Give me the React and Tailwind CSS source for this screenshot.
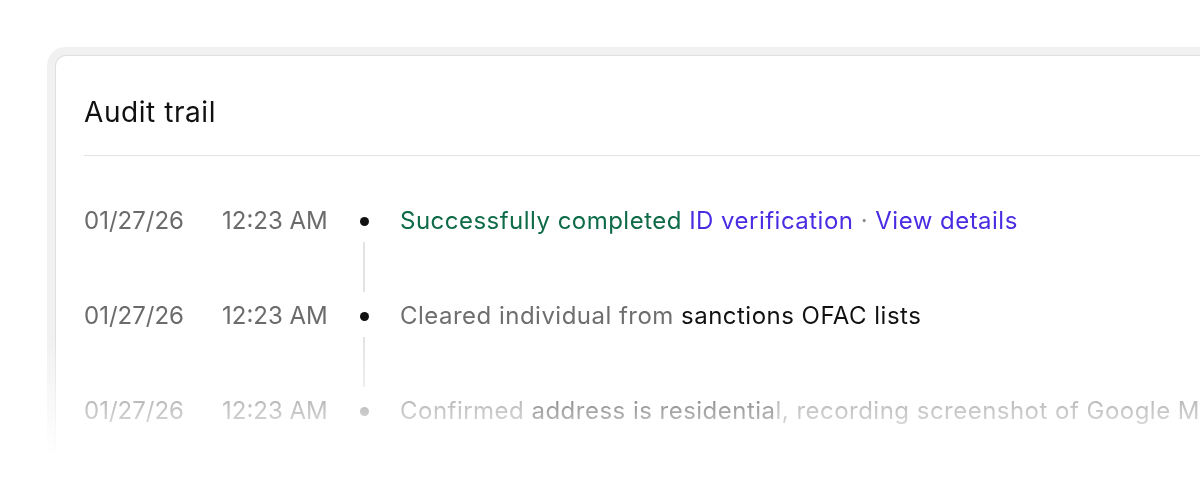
import React from "react";

const rows = [
  {
    date: "01/27/26",
    time: "12:23 AM",
    dot: "bg-[#111111]",
    body: (
      <>
        <span className="text-[#0d6b47]">Successfully completed</span>{" "}
        <span className="text-[#4b2ce3]">ID verification</span>
        <span className="text-[#8a8a8a]"> · </span>
        <span className="text-[#4b2ce3]">View details</span>
      </>
    ),
  },
  {
    date: "01/27/26",
    time: "12:23 AM",
    dot: "bg-[#111111]",
    body: (
      <>
        <span className="text-[#6e6e6e]">Cleared individual from</span>{" "}
        <span className="text-[#111111]">sanctions OFAC lists</span>
      </>
    ),
  },
  {
    date: "01/27/26",
    time: "12:23 AM",
    dot: "bg-[#6e6e6e]",
    body: (
      <>
        <span className="text-[#6e6e6e]">Confirmed</span>{" "}
        <span className="text-[#111111]">address is residentia</span>
        <span className="text-[#6e6e6e]">l, recording screenshot of Google Maps</span>
      </>
    ),
  },
];

const Row = ({ row }) => (
  <div className="flex items-center h-10 whitespace-nowrap">
    <div className="w-[138px] shrink-0 text-[#6b6b6b] tracking-normal">{row.date}</div>
    <div className="w-[126px] shrink-0 text-[#6b6b6b] tracking-normal">{row.time}</div>
    <div className="w-8 shrink-0 flex justify-center">
      <span className={`w-[9px] h-[9px] rounded-full ${row.dot}`} />
    </div>
    <div className="ml-5">{row.body}</div>
  </div>
);

const Connector = () => (
  <div className="h-[55px] pl-[279px] pt-[1px]">
    <div className="w-[2px] h-[50px] bg-[#e3e3e3]" />
  </div>
);

export default function App() {
  return (
    <div
      className="w-[1200px] h-[486px] bg-white overflow-hidden pt-[47px] pl-[47px]"
      style={{ fontFamily: "Inter, 'Liberation Sans', sans-serif" }}
    >
      {/* Card with soft ring, fading out at the bottom */}
      <div className="w-[1200px] h-[439px] bg-[#f1f1f1] p-[8px] pr-0 pb-0 rounded-tl-[18px] [mask-image:linear-gradient(to_bottom,black_290px,transparent_410px)]">
        <div className="h-full bg-white border border-[#e0e0e0] border-r-0 border-b-0 rounded-tl-[11px] pl-[28px]">
          {/* Header */}
          <div className="h-[100px] flex items-center pt-[12px] border-b border-[#e2e2e2]">
            <h2 className="text-[28px] text-[#111111] tracking-[0.02em]">Audit trail</h2>
          </div>

          {/* Timeline */}
          <div className="pt-[45px] text-[24px] tracking-[0.02em]">
            <Row row={rows[0]} />
            <Connector />
            <Row row={rows[1]} />
            <Connector />
            <Row row={rows[2]} />
          </div>
        </div>
      </div>
    </div>
  );
}
